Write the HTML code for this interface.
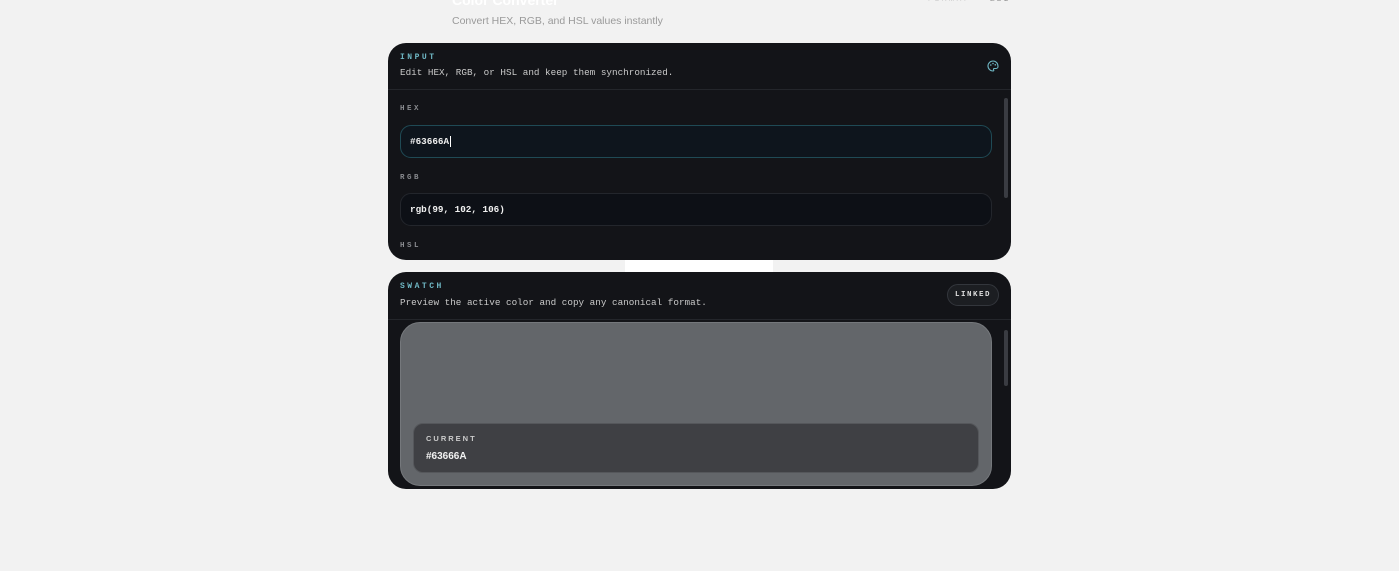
<!DOCTYPE html>
<html><head><style>
*{box-sizing:border-box;margin:0;padding:0}
body{width:1399px;height:571px;background:#f2f2f2;font-family:"Liberation Sans",sans-serif;position:relative;overflow:hidden}
.mono{font-family:"Liberation Mono","DejaVu Sans Mono",monospace}
.card{position:absolute;left:388px;width:623px;height:217px;background:#131418;border-radius:18px;overflow:hidden}
.lbl{position:absolute;left:12px;font-size:8px;font-weight:bold;letter-spacing:2.5px;color:#6fb7c4}
.desc{position:absolute;left:12px;font-size:9.3px;color:#c9c9c9}
.div{position:absolute;left:0;right:0;height:1px;background:#24262b}
.flbl{position:absolute;left:12px;font-size:7.5px;font-weight:bold;letter-spacing:2.5px;color:#8a8c90}
.inp{position:absolute;left:12px;width:592px;height:33px;border-radius:11px;background:#0d1016;border:1px solid #23262c;font-size:9.3px;color:#f0f0f0;padding:10px 9px;font-weight:bold}
.sb{position:absolute;right:3px;width:4px;border-radius:2px;background:#3a3c42}
</style></head><body>
<div style="position:absolute;left:452px;top:-8px;font-size:14px;color:#fff;font-weight:bold">Color Converter</div>
<div style="position:absolute;left:452px;top:15px;font-size:10.5px;color:#9a9a9a">Convert HEX, RGB, and HSL values instantly</div>
<div style="position:absolute;left:928px;top:-4px;font-size:7px;color:#ccc;letter-spacing:2px">FORMAT</div>
<div style="position:absolute;left:990px;top:-4px;font-size:7px;color:#888;letter-spacing:2px">ESC</div>
<div style="position:absolute;left:625px;top:258px;width:148px;height:16px;background:#fff"></div>

<div class="card" style="top:43px">
 <div class="lbl mono" style="top:10px">INPUT</div>
 <div class="desc mono" style="top:24px">Edit HEX, RGB, or HSL and keep them synchronized.</div>
 <svg style="position:absolute;left:599px;top:17px" width="12" height="12" viewBox="0 0 12 12"><path d="M6 1a5 5 0 1 0 0 10c.8 0 1-.6.6-1.2-.4-.6 0-1.3.7-1.3H9a2 2 0 0 0 2-2C11 3.2 8.8 1 6 1z" fill="none" stroke="#6fb7c4" stroke-width="1.1"/><circle cx="3.8" cy="5" r=".8" fill="#6fb7c4"/><circle cx="6" cy="3.5" r=".8" fill="#6fb7c4"/><circle cx="8.3" cy="4.8" r=".8" fill="#6fb7c4"/></svg>
 <div class="div" style="top:46px"></div>
 <div class="flbl mono" style="top:62px">HEX</div>
 <div class="inp mono" style="top:82px;border-color:#1f4a55;background:#0e151d">#63666A<span style="border-left:1px solid #fff;margin-left:1px"></span></div>
 <div class="flbl mono" style="top:131px">RGB</div>
 <div class="inp mono" style="top:150px">rgb(99, 102, 106)</div>
 <div class="flbl mono" style="top:199px">HSL</div>
 <div class="sb" style="top:55px;height:100px"></div>
</div>

<div class="card" style="top:272px">
 <div class="lbl mono" style="top:10px">SWATCH</div>
 <div class="desc mono" style="top:25px">Preview the active color and copy any canonical format.</div>
 <div class="mono" style="position:absolute;left:559px;top:12px;width:52px;height:22px;border-radius:11px;background:#1c1e22;border:1px solid #33363c;color:#ddd;font-size:7.5px;font-weight:bold;letter-spacing:1.5px;text-align:center;line-height:20px">LINKED</div>
 <div class="div" style="top:47px"></div>
 <div style="position:absolute;left:12px;top:50px;width:592px;height:164px;border-radius:20px;background:#63666a;border:1px solid #75787c">
  <div style="position:absolute;left:12px;top:100px;width:566px;height:50px;border-radius:10px;background:#3f4044;border:1px solid #55575b">
   <div style="position:absolute;left:12px;top:10px;font-size:7.5px;font-weight:bold;letter-spacing:2px;color:#ccc">CURRENT</div>
   <div style="position:absolute;left:12px;top:27px;font-size:10px;font-weight:bold;color:#f2f2f2">#63666A</div>
  </div>
 </div>
 <div class="sb" style="top:58px;height:56px"></div>
</div>
</body></html>
